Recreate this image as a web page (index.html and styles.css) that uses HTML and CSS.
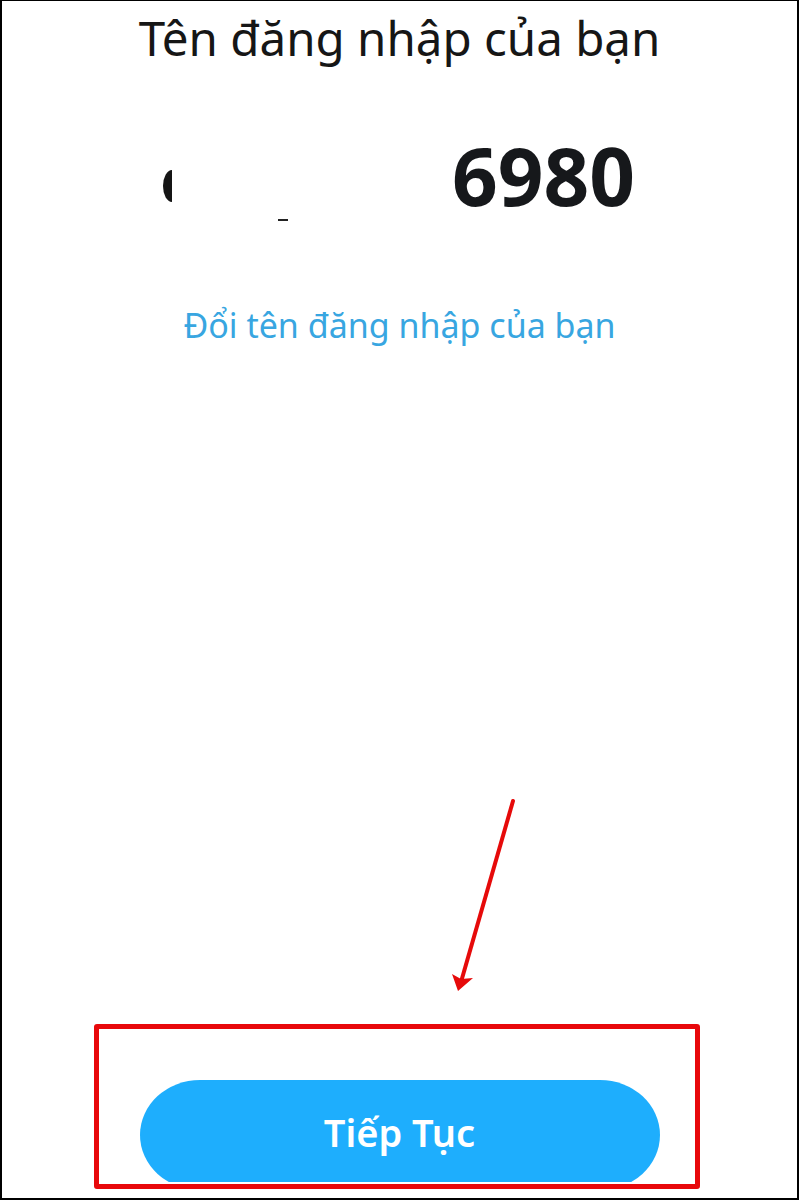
FILE: index.html
```html
<!DOCTYPE html>
<html lang="vi">
<head>
<meta charset="utf-8">
<title>Tên đăng nhập của bạn</title>
<link rel="stylesheet" href="styles.css">
</head>
<body>
<div class="frame">
  <h1 class="title">Tên đăng nhập của bạn</h1>
  <div class="username">
    <span class="frag-c"></span>
    <span class="frag-dash"></span>
    <span class="num">6980</span>
  </div>
  <a class="change" href="#">Đổi tên đăng nhập của bạn</a>
  <div class="btn-wrap">
    <button class="btn" type="button">Tiếp Tục</button>
  </div>
  <svg class="arrow" viewBox="0 0 799 1200" width="799" height="1200" aria-hidden="true">
    <line x1="513" y1="801" x2="461" y2="982" stroke="#e60a0a" stroke-width="4" stroke-linecap="round"/>
    <polygon points="458,991 452,974 461,979 473,978" fill="#e60a0a"/>
  </svg>
  <div class="highlight"></div>
</div>
</body>
</html>
```
FILE: styles.css
```css
html, body {
  margin: 0;
  padding: 0;
  background: #fff;
}
.frame {
  position: relative;
  box-sizing: border-box;
  width: 799px;
  height: 1200px;
  border-style: solid;
  border-color: #000;
  border-width: 1px 2px 2px 2px;
  display: flex;
  flex-direction: column;
  overflow: hidden;
  font-family: "Noto Sans", "Open Sans", sans-serif;
}
.title {
  margin: 5px 0 0;
  font-size: 47.5px;
  line-height: 64px;
  font-weight: 400;
  color: #161616;
  text-align: center;
}
.username {
  margin-top: 65px;
  height: 90px;
  display: flex;
  align-items: flex-start;
}
.frag-c {
  margin-left: 161px;
  margin-top: 35px;
  width: 9px;
  height: 32px;
  background: #151515;
  border-radius: 9px 0 0 9px / 16px 0 0 16px;
}
.frag-dash {
  margin-left: 106px;
  margin-top: 84px;
  width: 10px;
  height: 2px;
  background: #222;
}
.num {
  margin-left: 164px;
  font-size: 80px;
  line-height: 80px;
  font-weight: 700;
  color: #16181b;
}
.change {
  margin-top: 80px;
  display: block;
  text-align: center;
  font-size: 34px;
  line-height: 40px;
  color: #38a6e1;
  text-decoration: none;
}
.btn-wrap {
  margin-top: auto;
  margin-bottom: 16px;
  height: 102px;
  overflow: hidden;
  display: flex;
  justify-content: center;
}
.btn {
  flex: none;
  width: 520px;
  height: 110px;
  border: none;
  border-radius: 60px / 55px;
  background: #1eaefd;
  color: #fff;
  font-family: "Noto Sans", "Open Sans", sans-serif;
  font-size: 38px;
  font-weight: 600;
  padding: 0 0 6px;
}
.arrow {
  position: absolute;
  left: -2px;
  top: -1px;
  pointer-events: none;
}
.highlight {
  position: absolute;
  left: 92px;
  top: 1023px;
  width: 606px;
  height: 165px;
  box-sizing: border-box;
  border: 5px solid #e8080b;
  border-radius: 3px;
  pointer-events: none;
}
```
